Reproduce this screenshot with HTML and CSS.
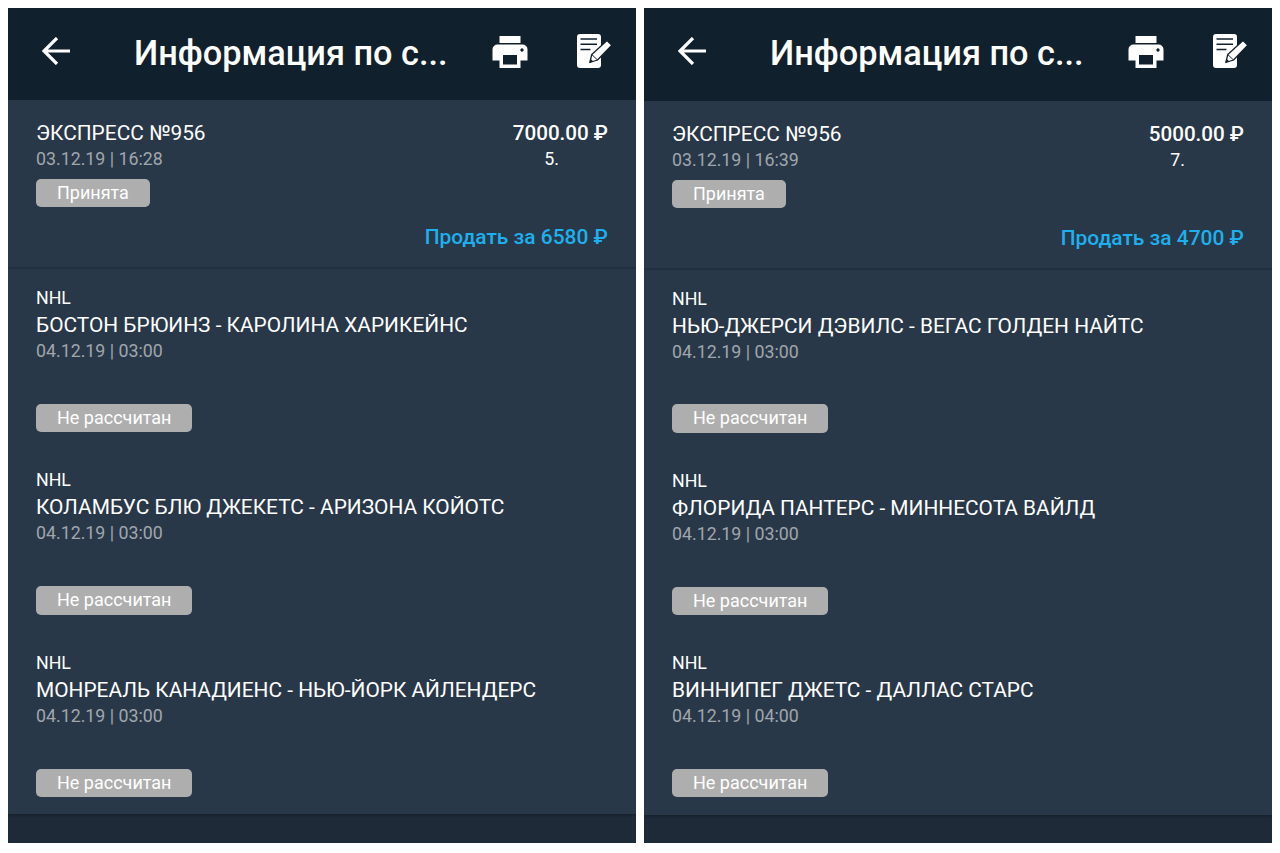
FILE: index.html
```
<!DOCTYPE html>
<html lang="ru">
<head>
<meta charset="UTF-8">
<meta name="viewport" content="width=device-width, initial-scale=1.0">
<title>Информация по ставке</title>
<link rel="stylesheet" href="styles.css">
</head>
<body>

<!-- shared icons -->
<svg class="sprite" width="0" height="0">
    <symbol id="icon-back" viewBox="0 0 28 28">
        <path d="M28 14H2M15 1L2 14l13 13" fill="none" stroke="#fff" stroke-width="3.2"/>
    </symbol>
    <symbol id="icon-print" viewBox="0 0 36 32">
        <path fill="#fff" fill-rule="evenodd" d="M7.500 0h21v7h-21zM5.500 8.500h25a5 5 0 0 1 5 5v11h-7V32h-21v-7.500h-7v-11a5 5 0 0 1 5-5zM11 19v9.500h14V19zM30 12.300a1.700 1.700 0 1 0 .01 0z"/>
    </symbol>
    <symbol id="icon-edit" viewBox="0 0 36 36">
        <rect x="1" y="1" width="24" height="34" rx="3" fill="#fff"/>
        <path d="M4.500 6H21M4.500 11.200H21M4.500 16.400h10" stroke="#11202d" stroke-width="1.500"/>
        <path d="M13.800 29.500L15.800 21.500 31 7.500l4.800 4.800L21.500 27z" fill="#fff" stroke="#11202d" stroke-width="1.300" stroke-linejoin="round"/>
        <path d="M15.800 21.500l5.700 5.500" stroke="#11202d" stroke-width="1"/>
        <path d="M13.800 29.500l.9-3.600 2.700 2.700z" fill="#11202d"/>
    </symbol>
</svg>

<div class="screens">
    <div class="screen">
        <div class="header">
            <svg class="back"><use href="#icon-back"/></svg>
            <h1>Информация по с...</h1>
            <svg class="print"><use href="#icon-print"/></svg>
            <svg class="edit"><use href="#icon-edit"/></svg>
        </div>
        <div class="summary">
            <div class="row">
                <div>
                    <p class="name">ЭКСПРЕСС №956</p>
                    <p class="date">03.12.19 | 16:28</p>
                </div>
                <div class="stake">
                    <p class="amount">7000.00 ₽</p>
                    <p class="odds">5.</p>
                </div>
            </div>
            <span class="badge">Принята</span>
            <p class="sell">Продать за 6580 ₽</p>
        </div>
        <div class="events">
            <div class="event">
                <p class="league">NHL</p>
                <p class="name">БОСТОН БРЮИНЗ - КАРОЛИНА ХАРИКЕЙНС</p>
                <p class="date">04.12.19 | 03:00</p>
                <span class="badge">Не рассчитан</span>
            </div>
            <div class="event">
                <p class="league">NHL</p>
                <p class="name">КОЛАМБУС БЛЮ ДЖЕКЕТС - АРИЗОНА КОЙОТС</p>
                <p class="date">04.12.19 | 03:00</p>
                <span class="badge">Не рассчитан</span>
            </div>
            <div class="event">
                <p class="league">NHL</p>
                <p class="name">МОНРЕАЛЬ КАНАДИЕНС - НЬЮ-ЙОРК АЙЛЕНДЕРС</p>
                <p class="date">04.12.19 | 03:00</p>
                <span class="badge">Не рассчитан</span>
            </div>
        </div>
    </div>

    <div class="screen second">
        <div class="header">
            <svg class="back"><use href="#icon-back"/></svg>
            <h1>Информация по с...</h1>
            <svg class="print"><use href="#icon-print"/></svg>
            <svg class="edit"><use href="#icon-edit"/></svg>
        </div>
        <div class="summary">
            <div class="row">
                <div>
                    <p class="name">ЭКСПРЕСС №956</p>
                    <p class="date">03.12.19 | 16:39</p>
                </div>
                <div class="stake">
                    <p class="amount">5000.00 ₽</p>
                    <p class="odds">7.</p>
                </div>
            </div>
            <span class="badge">Принята</span>
            <p class="sell">Продать за 4700 ₽</p>
        </div>
        <div class="events">
            <div class="event">
                <p class="league">NHL</p>
                <p class="name">НЬЮ-ДЖЕРСИ ДЭВИЛС - ВЕГАС ГОЛДЕН НАЙТС</p>
                <p class="date">04.12.19 | 03:00</p>
                <span class="badge">Не рассчитан</span>
            </div>
            <div class="event">
                <p class="league">NHL</p>
                <p class="name">ФЛОРИДА ПАНТЕРС - МИННЕСОТА ВАЙЛД</p>
                <p class="date">04.12.19 | 03:00</p>
                <span class="badge">Не рассчитан</span>
            </div>
            <div class="event">
                <p class="league">NHL</p>
                <p class="name">ВИННИПЕГ ДЖЕТС - ДАЛЛАС СТАРС</p>
                <p class="date">04.12.19 | 04:00</p>
                <span class="badge">Не рассчитан</span>
            </div>
        </div>
    </div>
</div>

</body>
</html>
```

FILE: styles.css
```
* {
    box-sizing: border-box;
}
body {
    margin: 0;
    background-color: #fff;
    font-family: Roboto, sans-serif;
    color: #fff;
}
h1, p {
    margin: 0;
    white-space: nowrap;
}
.sprite {
    display: block;
}
.screens {
    display: flex;
    gap: 8px;
    padding: 8px;
}
.screen {
    width: 628px;
    height: 835px;
    background-color: #1e2a38;
    overflow: hidden;
}
.header {
    display: flex;
    align-items: flex-start;
    height: 92px;
    padding-left: 34px;
    background-color: #11202d;
}
.second .header {
    height: 92.6px;
}
h1 {
    width: 314px;
    margin: 25px 0 0 64px;
    font-size: 34.3px;
    font-weight: 500;
    line-height: 40px;
}
.back {
    width: 28px;
    height: 28px;
    margin-top: 29px;
}
.print {
    width: 36px;
    height: 32px;
    margin: 28px 0 0 44px;
}
.edit {
    width: 36px;
    height: 36px;
    margin: 25px 0 0 48px;
}
.summary {
    height: 169px;
    padding: 20.4px 28px 0;
    background-color: #293848;
    border-bottom: 2px solid #233141;
}
.row {
    display: flex;
    justify-content: space-between;
}
.name {
    font-size: 20.87px;
    line-height: 26px;
}
.date {
    font-size: 17.8px;
    line-height: 26px;
    color: #a0a6ad;
}
.stake {
    text-align: right;
}
.amount {
    font-size: 20.6px;
    font-weight: 500;
    line-height: 26px;
}
.odds {
    padding-right: 49px;
    font-size: 17.8px;
    line-height: 26px;
}
.second .odds {
    padding-right: 59px;
}
.badge {
    display: block;
    width: fit-content;
    height: 28.5px;
    padding: 0 21px;
    border-radius: 5px;
    background-color: #aeaeae;
    font-size: 18px;
    line-height: 28.5px;
}
.summary .badge {
    margin-top: 6.6px;
}
.sell {
    margin-top: 17px;
    font-size: 20.95px;
    font-weight: 500;
    line-height: 26px;
    color: #1eb0ee;
    text-align: right;
}
.events {
    height: 545px;
    padding: 16px 28px 0;
    background-color: #293848;
    box-shadow: 0 1px 3px rgba(0, 0, 0, 0.3);
}
.event {
    height: 182.4px;
}
.second .event {
    height: 182.2px;
}
.league {
    margin-bottom: 1px;
    font-size: 17.8px;
    line-height: 26px;
}
.event .badge {
    margin-top: 39.8px;
}
```
